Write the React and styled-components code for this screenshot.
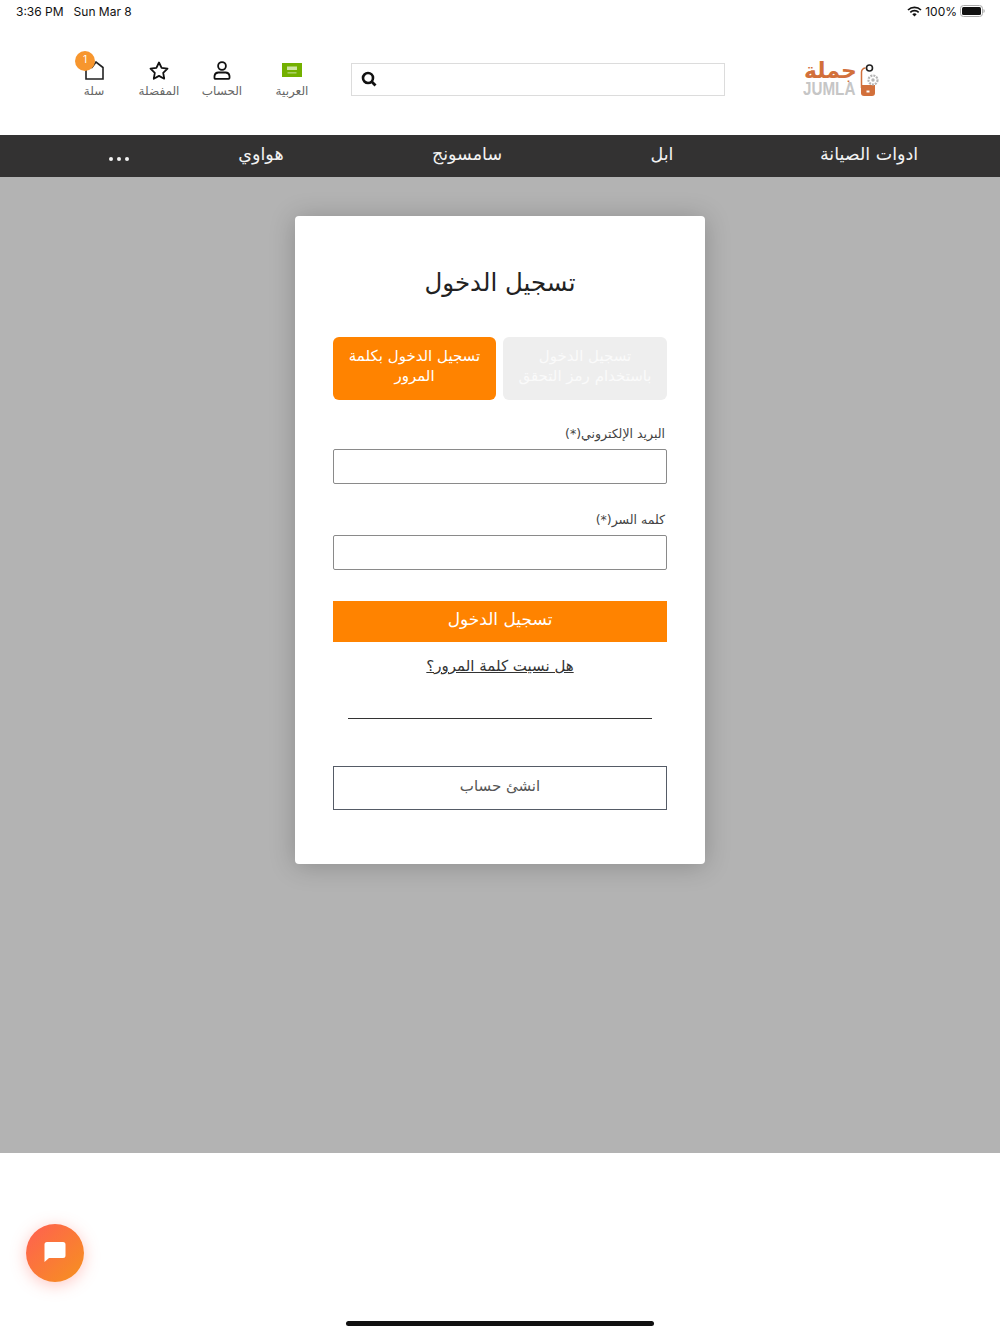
import React from "react";
import styled, { createGlobalStyle } from "styled-components";

const GlobalStyle = createGlobalStyle`
  html, body {
    margin: 0;
    padding: 0;
    background: #ffffff;
  }
  * {
    box-sizing: border-box;
  }
  body {
    font-family: "DejaVu Sans", "Liberation Sans", sans-serif;
  }
`;

const Page = styled.div`
  width: 1000px;
  height: 1334px;
  display: flex;
  flex-direction: column;
  position: relative;
  overflow: hidden;
`;

const StatusBar = styled.div`
  height: 24px;
  padding: 0 15px 2px 16px;
  display: flex;
  align-items: center;
  justify-content: space-between;
  font-family: "Inter", "Liberation Sans", sans-serif;
  font-size: 12px;
  color: #111;
`;

const StatusGroup = styled.div`
  display: flex;
  align-items: center;
  gap: ${(p) => p.$gap}px;
`;

const Header = styled.header`
  height: 111px;
  display: flex;
  align-items: center;
`;

const HeaderIcons = styled.div`
  width: 351px;
  padding: 0 0 2px 75px;
  display: flex;
  align-items: flex-start;
  gap: 25px;
`;

const HeaderItem = styled.div`
  width: ${(p) => p.$width}px;
  display: flex;
  flex-direction: column;
  align-items: center;
  position: relative;
`;

const IconSlot = styled.div`
  height: 24px;
  display: flex;
  align-items: center;
  justify-content: center;
  color: #111;
`;

const ItemLabel = styled.span`
  margin-top: 1px;
  font-size: 12px;
  line-height: 16px;
  color: #666;
  white-space: nowrap;
`;

const CartBadge = styled.span`
  position: absolute;
  top: -7px;
  left: 0;
  width: 20px;
  height: 20px;
  border-radius: 50%;
  background: #f7962e;
  color: #fff;
  font-family: "Inter", sans-serif;
  font-size: 10px;
  line-height: 17px;
  text-align: center;
`;

const SearchBox = styled.div`
  width: 374px;
  height: 33px;
  border: 1px solid #dcdcdc;
  display: flex;
  align-items: center;
  padding: 0 0 2px 9px;
`;

const LogoWrap = styled.div`
  margin-left: 78px;
  display: flex;
  align-items: flex-start;
  margin-top: 1px;
`;

const LogoText = styled.div`
  width: 55px;
  display: flex;
  flex-direction: column;
`;

const LogoArabic = styled.span`
  height: 17px;
  text-align: center;
  font-size: 22px;
  line-height: 13px;
  color: #d2703b;
  font-weight: 700;
`;

const LogoLatin = styled.span`
  height: 15px;
  font-family: "Liberation Sans", sans-serif;
  font-size: 19px;
  font-weight: 700;
  line-height: 15px;
  color: #c6c6c6;
  transform: scaleX(0.8);
  transform-origin: left center;
`;

const LogoMark = styled.svg`
  display: block;
`;

const Nav = styled.nav`
  height: 42px;
  background: #333232;
  display: flex;
  align-items: center;
  color: #f2f2f2;
  font-size: 17.5px;
  padding-bottom: 5px;
`;

const NavItem = styled.span`
  width: ${(p) => p.$width}px;
  margin-left: ${(p) => p.$offset || 0}px;
  text-align: center;
  white-space: nowrap;
`;

const Dots = styled.div`
  width: 238px;
  display: flex;
  justify-content: center;
  gap: 4px;
  padding-top: 10px;
`;

const Dot = styled.i`
  width: 4px;
  height: 4px;
  border-radius: 50%;
  background: #f2f2f2;
`;

const Overlay = styled.main`
  height: 976px;
  background: #b3b3b3;
  display: flex;
  justify-content: center;
  align-items: flex-start;
  padding-top: 39px;
`;

const Card = styled.section`
  width: 410px;
  height: 648px;
  background: #fff;
  border-radius: 4px;
  box-shadow: 0 2px 26px rgba(0, 0, 0, 0.22);
  padding: 0 38px;
  display: flex;
  flex-direction: column;
  direction: rtl;
`;

const Title = styled.h1`
  margin: 50px 0 0;
  height: 34px;
  font-size: 24.5px;
  line-height: 34px;
  font-weight: 400;
  text-align: center;
  color: #222;
`;

const Tabs = styled.div`
  margin-top: 37px;
  display: grid;
  grid-template-columns: 164px 163px;
  gap: 7px;
`;

const Tab = styled.div`
  height: 63px;
  border-radius: 6px;
  background: ${(p) => (p.$active ? "#ff8300" : "#eeeeee")};
  color: ${(p) => (p.$active ? "#ffffff" : "#fafafa")};
  font-size: 15px;
  line-height: 20px;
  text-align: center;
  display: flex;
  align-items: center;
  justify-content: center;
  padding: 0 10px 6px;
`;

const Field = styled.div`
  margin-top: ${(p) => p.$top}px;
  display: flex;
  flex-direction: column;
`;

const Label = styled.label`
  font-size: 12.5px;
  line-height: 18px;
  color: #444;
  padding-right: 2px;
  margin-bottom: 6px;
`;

const Input = styled.input`
  height: 35px;
  width: 100%;
  border: 1px solid #8a8a8a;
  border-radius: 2px;
  background: #fff;
  outline: none;
`;

const Submit = styled.button`
  margin-top: 31px;
  height: 41px;
  border: 0;
  background: #ff8300;
  color: #fff;
  font-family: inherit;
  font-size: 17px;
  padding: 0 0 5px;
`;

const Forgot = styled.a`
  margin-top: 14px;
  font-size: 15px;
  line-height: 20px;
  color: #333;
  text-align: center;
  text-decoration: underline;
`;

const Divider = styled.hr`
  margin: 42px 15px 0;
  width: calc(100% - 30px);
  border: 0;
  border-top: 1px solid #333;
`;

const CreateButton = styled.button`
  margin-top: 47px;
  height: 44px;
  border: 1px solid #555b66;
  background: #fff;
  color: #555;
  font-family: inherit;
  font-size: 15px;
  padding: 0 0 4px;
`;

const Footer = styled.div`
  flex: 1;
  position: relative;
`;

const ChatButton = styled.button`
  position: absolute;
  top: 71px;
  left: 26px;
  width: 58px;
  height: 58px;
  padding: 0;
  border: 0;
  border-radius: 50%;
  background: linear-gradient(135deg, #ff5f52, #f6921e);
  box-shadow: 0 3px 16px rgba(255, 95, 82, 0.35);
  display: flex;
  align-items: center;
  justify-content: center;
`;

const HomeBar = styled.div`
  position: absolute;
  left: 346px;
  bottom: 8px;
  width: 308px;
  height: 5px;
  border-radius: 3px;
  background: #111;
`;

function Wifi() {
  return (
    <svg width="15" height="11" viewBox="0 0 15 11">
      <path d="M1 4a9.5 9.5 0 0 1 13 0" fill="none" stroke="#111" strokeWidth="1.7" />
      <path d="M3.3 6.3a6.2 6.2 0 0 1 8.4 0" fill="none" stroke="#111" strokeWidth="1.7" />
      <path d="M5.3 8.3a3.2 3.2 0 0 1 4.4 0L7.5 10.6z" fill="#111" />
    </svg>
  );
}

function Battery() {
  return (
    <svg width="25" height="12" viewBox="0 0 25 12">
      <rect x="0.5" y="0.5" width="22" height="11" rx="3" fill="none" stroke="#aaa" />
      <rect x="2" y="2" width="19" height="8" rx="1.5" fill="#111" />
      <path d="M23.5 4v4c.8-.3 1.2-1 1.2-2s-.4-1.7-1.2-2z" fill="#aaa" />
    </svg>
  );
}

function Flag() {
  return (
    <svg width="20" height="14" viewBox="0 0 20 14">
      <rect width="20" height="14" fill="#73b000" />
      <rect x="5" y="3.5" width="10" height="3.5" fill="#cfe5a3" />
      <rect x="5.5" y="9.5" width="9" height="0.8" fill="#dfeec4" />
    </svg>
  );
}

function Bag() {
  return (
    <svg width="19" height="19" viewBox="0 0 19 19">
      <path d="M1 18V6.5h6L11 1l7 5.5V18z" fill="none" stroke="#222" strokeWidth="1.6" />
    </svg>
  );
}

function Star() {
  return (
    <svg width="20" height="19" viewBox="0 0 20 19">
      <path
        d="M10 1.5l2.6 5.4 5.9.8-4.3 4.1 1 5.9L10 14.9l-5.2 2.8 1-5.9L1.5 7.7l5.9-.8z"
        fill="none"
        stroke="#111"
        strokeWidth="1.8"
        strokeLinejoin="round"
      />
    </svg>
  );
}

function User() {
  return (
    <svg width="18" height="19" viewBox="0 0 18 19">
      <circle cx="9" cy="5" r="3.9" fill="none" stroke="#111" strokeWidth="1.8" />
      <path
        d="M5.5 11.5h7a4 4 0 0 1 4 3.3V17a.9.9 0 0 1-.9.9H2.4a.9.9 0 0 1-.9-.9v-2.2a4 4 0 0 1 4-3.3z"
        fill="none"
        stroke="#111"
        strokeWidth="1.8"
      />
    </svg>
  );
}

function Search() {
  return (
    <svg width="16" height="16" viewBox="0 0 16 16">
      <circle cx="7" cy="7" r="5" fill="none" stroke="#111" strokeWidth="2.6" />
      <path d="M10.8 10.8L14.5 14.5" stroke="#111" strokeWidth="2.8" />
    </svg>
  );
}

function Chat() {
  return (
    <svg width="22" height="22" viewBox="0 0 22 22">
      <path d="M3 0h16a2.5 2.5 0 0 1 2.5 2.5v11a2.5 2.5 0 0 1-2.5 2.5H5l-4.5 4V2.5A2.5 2.5 0 0 1 3 0z" fill="#fff" />
    </svg>
  );
}

function PhoneMark() {
  return (
    <LogoMark width="22" height="33" viewBox="0 0 22 33">
      <path d="M3.5 24V8a4 4 0 0 1 4-4" fill="none" stroke="#d2703b" strokeWidth="1.5" />
      <path d="M3 21h14v8a3 3 0 0 1-3 3H6a3 3 0 0 1-3-3z" fill="#d2703b" />
      <rect x="8.5" y="26.5" width="3" height="2" fill="#fff" />
      <circle cx="11.5" cy="4" r="3" fill="none" stroke="#222" strokeWidth="1.6" />
      <circle cx="15" cy="16" r="4.5" fill="#fff" stroke="#b5b5b5" strokeWidth="2.2" strokeDasharray="2 1" />
      <circle cx="15" cy="16" r="1.7" fill="#b5b5b5" />
    </LogoMark>
  );
}

export default function App() {
  return (
    <Page>
      <GlobalStyle />
      <StatusBar>
        <StatusGroup $gap={10}>
          <span>3:36 PM</span>
          <span>Sun Mar 8</span>
        </StatusGroup>
        <StatusGroup $gap={3}>
          <Wifi />
          <span>100%</span>
          <Battery />
        </StatusGroup>
      </StatusBar>

      <Header>
        <HeaderIcons>
          <HeaderItem $width={38}>
            <CartBadge>1</CartBadge>
            <IconSlot><Bag /></IconSlot>
            <ItemLabel>سلة</ItemLabel>
          </HeaderItem>
          <HeaderItem $width={42}>
            <IconSlot><Star /></IconSlot>
            <ItemLabel>المفضلة</ItemLabel>
          </HeaderItem>
          <HeaderItem $width={34}>
            <IconSlot><User /></IconSlot>
            <ItemLabel>الحساب</ItemLabel>
          </HeaderItem>
          <HeaderItem $width={56}>
            <IconSlot><Flag /></IconSlot>
            <ItemLabel>العربية</ItemLabel>
          </HeaderItem>
        </HeaderIcons>
        <SearchBox><Search /></SearchBox>
        <LogoWrap>
          <LogoText>
            <LogoArabic>جملة</LogoArabic>
            <LogoLatin>JUMLA</LogoLatin>
          </LogoText>
          <PhoneMark />
        </LogoWrap>
      </Header>

      <Nav>
        <Dots><Dot /><Dot /><Dot /></Dots>
        <NavItem $width={46}>هواوي</NavItem>
        <NavItem $width={366}>سامسونج</NavItem>
        <NavItem $width={24}>ابل</NavItem>
        <NavItem $width={102} $offset={144}>ادوات الصيانة</NavItem>
      </Nav>

      <Overlay>
        <Card>
          <Title>تسجيل الدخول</Title>
          <Tabs>
            <Tab>تسجيل الدخول باستخدام رمز التحقق</Tab>
            <Tab $active>تسجيل الدخول بكلمة المرور</Tab>
          </Tabs>
          <Field $top={25}>
            <Label>البريد الإلكتروني(*)</Label>
            <Input />
          </Field>
          <Field $top={27}>
            <Label>كلمه السر(*)</Label>
            <Input />
          </Field>
          <Submit>تسجيل الدخول</Submit>
          <Forgot>هل نسيت كلمة المرور؟</Forgot>
          <Divider />
          <CreateButton>انشئ حساب</CreateButton>
        </Card>
      </Overlay>

      <Footer>
        <ChatButton><Chat /></ChatButton>
        <HomeBar />
      </Footer>
    </Page>
  );
}
